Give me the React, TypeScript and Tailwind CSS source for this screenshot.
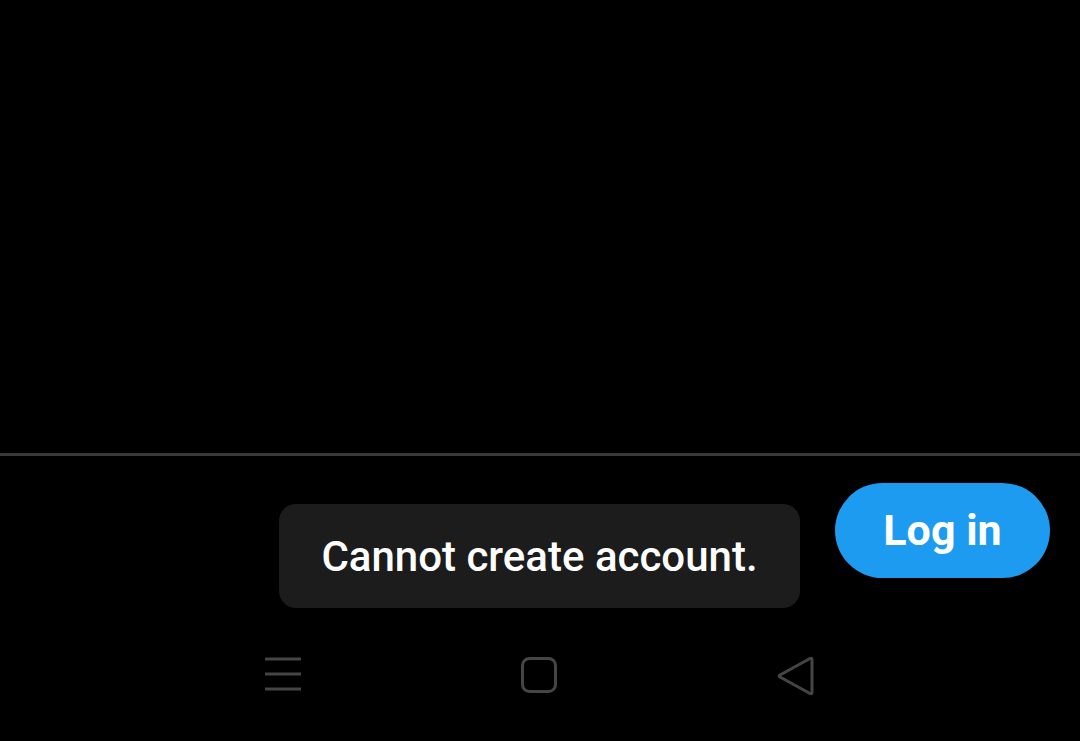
export default function App() {
  return (
    <div
      className="relative w-[1080px] h-[741px] bg-black overflow-hidden flex flex-col"
      style={{ fontFamily: "Roboto, 'Noto Sans', sans-serif" }}
    >
      {/* empty content area */}
      <div className="h-[453px] shrink-0" />
      <div className="h-[3px] shrink-0 bg-[#38383a]" />

      {/* bottom bar */}
      <div className="flex justify-end pt-[27px] pr-[30px] shrink-0">
        <button className="w-[215px] h-[95px] rounded-full bg-[#1d9bf0] text-white text-[43px] font-bold leading-none flex items-center justify-center">
          Log in
        </button>
      </div>

      {/* system nav */}
      <div className="mt-auto h-[121px] flex items-start justify-center gap-[219px] pt-[36px] shrink-0">
        <svg width="36" height="36" viewBox="0 0 36 36" fill="none" stroke="#454545" strokeWidth="3">
          <line x1="0" y1="3" x2="36" y2="3" />
          <line x1="0" y1="18" x2="36" y2="18" />
          <line x1="0" y1="33" x2="36" y2="33" />
        </svg>
        <svg width="38" height="38" viewBox="0 0 38 38" fill="none" stroke="#454545" strokeWidth="3">
          <rect x="2.5" y="2.5" width="33" height="33" rx="7" />
        </svg>
        <svg width="38" height="40" viewBox="0 0 38 40" fill="none" stroke="#454545" strokeWidth="3" strokeLinejoin="round">
          <path d="M35 3.5 L35 36.5 Q35 38.5 33 37.5 L3 21 Q1.5 20 3 19 L33 2.5 Q35 1.5 35 3.5 Z" />
        </svg>
      </div>

      {/* toast */}
      <div className="absolute left-[279px] top-[504px] w-[521px] h-[104px] rounded-[17px] bg-[#1c1c1c] flex items-center justify-center">
        <span className="text-white text-[42px] font-medium leading-none pt-[2px]">
          Cannot create account.
        </span>
      </div>
    </div>
  );
}
